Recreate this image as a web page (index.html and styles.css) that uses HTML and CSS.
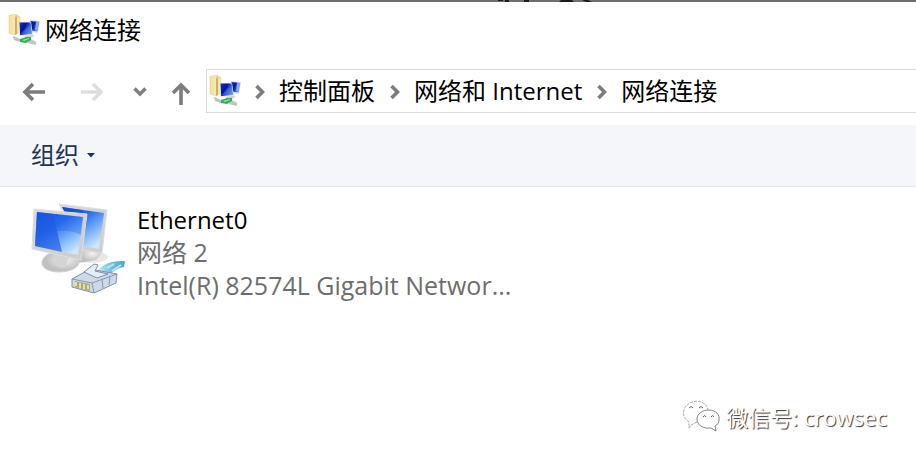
FILE: index.html
```html
<!DOCTYPE html>
<html lang="zh-CN">
<head>
<meta charset="utf-8">
<title>网络连接</title>
<link rel="stylesheet" href="styles.css">
</head>
<body>
<svg class="defs" aria-hidden="true">
  <defs>
    <linearGradient id="folder" x1="0" x2="1"><stop offset="0" stop-color="#f3e0a0"/><stop offset=".6" stop-color="#f8eab5"/><stop offset="1" stop-color="#e3c977"/></linearGradient>
    <linearGradient id="deep" x1="0" x2="1" y1="0" y2=".5"><stop offset="0" stop-color="#1238c0"/><stop offset=".45" stop-color="#03129a"/><stop offset=".65" stop-color="#1d47cc"/><stop offset="1" stop-color="#7fa4ee"/></linearGradient>
    <linearGradient id="screen" x1="0" y1="0" x2=".7" y2="1"><stop offset="0" stop-color="#1450e0"/><stop offset=".4" stop-color="#2a6df0"/><stop offset=".75" stop-color="#83b9fa"/><stop offset="1" stop-color="#cde7fd"/></linearGradient>
    <linearGradient id="frame" x1="0" y1="0" x2="1" y2="1"><stop offset="0" stop-color="#dadad8"/><stop offset="1" stop-color="#cbcccb"/></linearGradient>
    <radialGradient id="stand" cx=".6" cy=".4"><stop offset="0" stop-color="#f3f3f2"/><stop offset="1" stop-color="#bfc0bf"/></radialGradient>
    <linearGradient id="cable" x1="0" x2="1"><stop offset="0" stop-color="#c7eaf3"/><stop offset=".5" stop-color="#6cc3de"/><stop offset="1" stop-color="#4aa5cb"/></linearGradient>
    <symbol id="net-folder" viewBox="0 0 32 32">
      <path d="M1 1.500L8 0l4 3v15l-5 3-6-2z" fill="url(#folder)" stroke="#dcc67b" stroke-width=".5"/>
      <path d="M8 1l1 3v16l-2 1V4z" fill="#cdb15d"/><path d="M9 4l3-1v14l-3 3z" fill="#f6e6ab"/>
      <path d="M22 6l10 1-2 12-8-1z" fill="#d3ddeb"/><path d="M22.500 7l8.500 1-1.500 9.500-6.500-1z" fill="url(#deep)"/>
      <path d="M28 7.700l3 .3-1.500 9-2.500-1z" fill="#7fa8ee"/>
      <path d="M11 8h12l2 13-14 1z" fill="#dfe5ed"/><path d="M11.500 8.500h11l1.700 11.500-12 1z" fill="url(#deep)"/>
      <path d="M12.500 20l7-7 3 0 1.500 6.500z" fill="#4a7adc" opacity=".55"/>
      <path d="M16 22l8-1 3 1-6 2z" fill="#c9ced1"/>
      <path d="M5 23l7 3M6 25l6 2M22 26l6 3M20 28l8 2" fill="none" stroke="#c0c4c6" stroke-width="2"/>
      <path d="M12 25l6-2h5v3l-5 3-6-1z" fill="#2fae57"/><path d="M14 26l7-2v1l-5 2z" fill="#8fe3a4"/>
    </symbol>
    <symbol id="chevron" viewBox="0 0 10 16"><path d="M1.500 2l6 6-6 6" fill="none" stroke="#7d7d7d" stroke-width="3.600"/></symbol>
  </defs>
</svg>

<div class="backdrop">
  <svg viewBox="0 0 150 2" width="150" height="2" aria-hidden="true"><path d="M28 0h5v1h-5zM35 0h4v2h-4zM54 0h5v2h-5zM91 0h11l2 2H89zM112 0h6l4 2h-6z" fill="#1c1a1a"/></svg>
</div>

<header class="titlebar">
  <svg class="icon32" aria-hidden="true"><use href="#net-folder"/></svg>
  <h1>网络连接</h1>
</header>

<div class="navbar">
  <nav class="history" aria-label="导航">
    <button type="button" aria-label="后退"><svg width="24" height="24" viewBox="0 0 24 24"><path d="M23 12H3M11 4l-8 8 8 8" fill="none" stroke="#7d7d7d" stroke-width="3.600"/></svg></button>
    <button type="button" aria-label="前进" disabled><svg width="24" height="24" viewBox="0 0 24 24"><path d="M1 12h20M13 4l8 8-8 8" fill="none" stroke="#dedede" stroke-width="3.600"/></svg></button>
    <button type="button" class="recent" aria-label="最近位置"><svg width="14" height="10" viewBox="0 0 14 10"><path d="M1.500 1.500L7 7l5.500-5.500" fill="none" stroke="#7d7d7d" stroke-width="3.400"/></svg></button>
    <button type="button" class="up" aria-label="向上"><svg width="20" height="24" viewBox="0 0 20 24"><path d="M10 23V3M2 11l8-8 8 8" fill="none" stroke="#7d7d7d" stroke-width="3.600"/></svg></button>
  </nav>
  <div class="address">
    <svg class="icon32" aria-hidden="true"><use href="#net-folder"/></svg>
    <svg class="sep" aria-hidden="true"><use href="#chevron"/></svg>
    <a href="#">控制面板</a>
    <svg class="sep" aria-hidden="true"><use href="#chevron"/></svg>
    <a href="#">网络和 Internet</a>
    <svg class="sep" aria-hidden="true"><use href="#chevron"/></svg>
    <a href="#">网络连接</a>
  </div>
</div>

<div class="toolbar">
  <button type="button">组织<svg width="8" height="5" viewBox="0 0 8 5" aria-hidden="true"><path d="M0 0h8L4 4.500z" fill="#1e3555"/></svg></button>
</div>

<main>
  <article class="connection">
    <svg class="adapter" viewBox="0 0 96 92" aria-hidden="true">
      <ellipse cx="60" cy="54" rx="18" ry="6" fill="#d9d9d9" opacity=".6"/>
      <path d="M50 46l12-2 10 6-6 7-18 3z" fill="url(#stand)"/>
      <path d="M29 1l48 6-5 43-20-3z" fill="url(#frame)" stroke="#dededc"/>
      <path d="M32 4l42 6-5 36-16-3z" fill="url(#screen)"/>
      <path d="M32 4l20 3 5 12-4 20z" fill="#1346d0" opacity=".5"/>
      <path d="M12 60c0-6 6-10 14-11l12 3c7 2 12 4 11 8-1 6-12 9-20 9-10 0-17-4-17-9z" fill="url(#stand)" stroke="#d0d1d0"/>
      <path d="M25 49l15 3-5 12c-5 2-9 0-10-3z" fill="#d3d4d3"/>
      <path d="M4 6l53 5-6 46L2 46z" fill="url(#frame)" stroke="#dededc"/>
      <path d="M7 9l46 5-5 38L5 43z" fill="url(#screen)"/>
      <path d="M7 9l16 2 9 38-27-6z" fill="#1b57df" opacity=".65"/>
      <path d="M23 11l30 3-2 18c-8-5-17-4-24-4z" fill="#1c58e4" opacity=".3"/>
      <path d="M70 65c6-6 15-7 25-7l-1 6c-7 1-11 5-16 9l-10-4z" fill="url(#cable)"/>
      <path d="M77 65l7-4M82 68l9-6" stroke="#b9e7f4" stroke-width="2"/>
      <path d="M42 76l18-10 27 5-1 9-22 10-22-6z" fill="#cfd9e6" stroke="#7f90a7"/>
      <path d="M42 76l20 4 25-9M62 80l2 10M72 76l1 9M80 73l-1 9" fill="none" stroke="#8798af"/>
      <path d="M54 69l10-8 4 1-3 6 13 3-11 4z" fill="#e6edf5" stroke="#7f90a7"/>
      <path d="M45 78l15 3v7l-15-4z" fill="#a5aa93"/>
      <path d="M46 79v4m4-3v5m4-4v5m4-4v4" stroke="#eee37a" stroke-width="2"/>
    </svg>
    <div class="details">
      <h2>Ethernet0</h2>
      <p>网络 2</p>
      <p>Intel(R) 82574L Gigabit Networ...</p>
    </div>
  </article>
</main>

<footer class="watermark">
  <svg width="38" height="34" viewBox="0 0 38 34" aria-hidden="true">
    <path d="M14 22l-6 3-2 3v-6C-2 17-1 7 7 3c7-4 17-1 18 7" fill="#fff" stroke="#888" stroke-width=".7" stroke-dasharray="3 1"/>
    <path d="M26 10c7 0 11 5 10 10 0 3-2 5-4 6l1 5-5-3c-8 1-14-3-14-9 0-5 5-9 12-9z" fill="#fff" stroke="#666" stroke-width=".8"/>
    <path d="M6 8q2-3 4 0M16 8q2-3 4 0M20 17q2-3 3 0M28 17q2-3 3 0" fill="none" stroke="#666"/>
  </svg>
  <span>微信号: crowsec</span>
</footer>
</body>
</html>
```
FILE: styles.css
```css
* { box-sizing: border-box; }

body {
  margin: 0;
  min-height: 100vh;
  display: flex;
  flex-direction: column;
  background: #fff;
  color: #000;
  font: 24px/32px "Open Sans", "Noto Sans CJK SC", sans-serif;
  overflow-x: hidden;
}

h1, h2, p { margin: 0; font-size: inherit; font-weight: 400; }
a { color: inherit; text-decoration: none; }
button { padding: 0; border: 0; background: none; color: inherit; font: inherit; }
svg { display: block; flex: none; }

.defs { position: absolute; width: 0; height: 0; }
.icon32 { width: 32px; height: 32px; }

.backdrop { height: 2px; padding-left: 470px; background: #706e6e; }

.titlebar {
  display: flex;
  align-items: center;
  gap: 5px;
  height: 56px;
  padding-left: 8px;
}

.navbar { display: flex; align-items: center; padding: 11px 0 12px; }

.history {
  display: flex;
  align-items: center;
  width: 206px;
  padding: 2px 0 0 22px;
}
.history button { margin-right: 34px; }
.history button:nth-child(2) { margin-right: 29px; }
.history .recent { margin-right: 24px; }
.history .up { margin: 4px 0 0; }

.address {
  flex: 1;
  display: flex;
  align-items: center;
  height: 44px;
  padding-left: 2px;
  border: 1px solid #d9d9d9;
  border-right: 0;
  white-space: nowrap;
}
.sep { width: 10px; height: 16px; margin: 2px 14px 0 15px; }
.icon32 + .sep { margin-left: 14px; }

.toolbar {
  padding: 14px 31px 15px;
  background: #f4f6f9;
  border-bottom: 1px solid #e4e8ed;
  color: #1e3555;
}
.toolbar button { display: flex; align-items: center; gap: 8px; }

main { flex: 1; padding: 16px 30px; }
.connection { display: flex; gap: 11px; }
.adapter { width: 96px; height: 92px; }
.details { line-height: 33px; color: #6d6d6d; white-space: nowrap; }
.details h2 { color: #000; }
.details p { font-size: 25px; }

.watermark {
  display: flex;
  justify-content: flex-end;
  align-items: center;
  gap: 5px;
  padding: 0 29px 24px 0;
  color: #fff;
  font-size: 22px;
  text-shadow: 1px 1px 1px #333;
}
```
